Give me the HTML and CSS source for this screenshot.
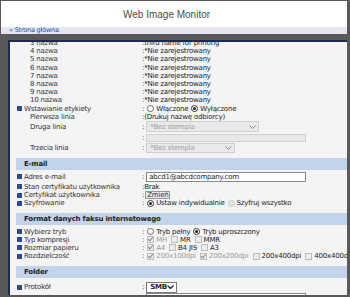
FILE: index.html
```html
<!DOCTYPE html>
<html lang="pl">
<head>
  <meta charset="UTF-8">
  <title>Web Image Monitor</title>
  <link rel="stylesheet" href="styles.css">
</head>
<body>
  <div class="top">
    <div class="brand">Web Image Monitor</div>
    <div class="crumb"><a href="#">&laquo; Strona główna</a></div>
  </div>

  <div class="frame">
    <div class="panel">
      <div class="list">
        <div class="row sub"><span class="key">3 nazwa</span><span class="val">:third name for printing</span></div>
        <div class="row sub"><span class="key">4 nazwa</span><span class="val">:*Nie zarejestrowany</span></div>
        <div class="row sub"><span class="key">5 nazwa</span><span class="val">:*Nie zarejestrowany</span></div>
        <div class="row sub"><span class="key">6 nazwa</span><span class="val">:*Nie zarejestrowany</span></div>
        <div class="row sub"><span class="key">7 nazwa</span><span class="val">:*Nie zarejestrowany</span></div>
        <div class="row sub"><span class="key">8 nazwa</span><span class="val">:*Nie zarejestrowany</span></div>
        <div class="row sub"><span class="key">9 nazwa</span><span class="val">:*Nie zarejestrowany</span></div>
        <div class="row sub"><span class="key">10 nazwa</span><span class="val">:*Nie zarejestrowany</span></div>
        <div class="row item"><span class="key">Wstawianie etykiety</span>
          <span class="val">:<span class="rb"></span>Włączone<span class="rb on"></span>Wyłączone</span></div>
        <div class="row sub"><span class="key">Pierwsza linia</span><span class="val">:(Drukuj nazwę odbiorcy)</span></div>
        <div class="row sub tall"><span class="key">Druga linia</span>
          <span class="val">:<span class="sel off w113">*Bez stempla<svg width="7" height="4" viewBox="0 0 7 4"><polyline points="0.5,0.5 3.5,3.5 6.5,0.5" fill="none" stroke="#8a8a8a"/></svg></span></span></div>
        <div class="row sub mid"><span class="key"></span><span class="val">:<span class="field off"></span></span></div>
        <div class="row sub tall2"><span class="key">Trzecia linia</span>
          <span class="val">:<span class="sel off w89">*Bez stempla<svg width="7" height="4" viewBox="0 0 7 4"><polyline points="0.5,0.5 3.5,3.5 6.5,0.5" fill="none" stroke="#8a8a8a"/></svg></span></span></div>

        <div class="section">E-mail</div>
        <div class="row item tall"><span class="key">Adres e-mail</span>
          <span class="val">:<span class="field">abcd1@abcdcompany.com</span></span></div>
        <div class="row item"><span class="key">Stan certyfikatu użytkownika</span><span class="val">:Brak</span></div>
        <div class="row item"><span class="key">Certyfikat użytkownika</span><span class="val">:<span class="btn">Zmień</span></span></div>
        <div class="row item"><span class="key">Szyfrowanie</span>
          <span class="val">:<span class="rb on"></span>Ustaw indywidualnie<span class="rb pale"></span>Szyfruj wszystko</span></div>

        <div class="section">Format danych faksu internetowego</div>
        <div class="row item"><span class="key">Wybierz tryb</span>
          <span class="val">:<span class="rb"></span>Tryb pełny<span class="rb on"></span>Tryb uproszczony</span></div>
        <div class="row item"><span class="key">Typ kompresji</span>
          <span class="val">:<span class="cb on"></span><span class="dim">MH</span><span class="cb"></span>MR<span class="cb"></span>MMR</span></div>
        <div class="row item"><span class="key">Rozmiar papieru</span>
          <span class="val">:<span class="cb on"></span><span class="dim">A4</span><span class="cb"></span>B4 JIS<span class="cb"></span>A3</span></div>
        <div class="row item"><span class="key">Rozdzielczość</span>
          <span class="val">:<span class="cb on"></span><span class="dim">200x100dpi</span><span class="cb on"></span><span class="dim">200x200dpi</span><span class="cb"></span>200x400dpi<span class="cb"></span>400x400dpi</span></div>

        <div class="section">Folder</div>
        <div class="row item tall3"><span class="key">Protokół</span>
          <span class="val">:<span class="sel w30">SMB<svg width="7" height="4" viewBox="0 0 7 4"><polyline points="0.5,0.5 3.5,3.5 6.5,0.5" fill="none" stroke="#222" stroke-width="1.3"/></svg></span></span></div>
        <div class="row item"><span class="key">Nazwa hosta</span><span class="val">:<span class="field"></span></span></div>
      </div>
    </div>
  </div>
</body>
</html>
```

FILE: styles.css
```css
html {
  background: #595959;
}

body {
  margin: 0;
  font-family: "DejaVu Sans", Verdana, sans-serif;
  font-size: 7px;
  letter-spacing: -0.2px;
  color: #333;
}

.top {
  margin: 1px 3px 0 1px;
  background: #fff;
}

.brand {
  height: 26px;
  line-height: 28px;
  padding-left: 122px;
  font-family: "Liberation Sans", Arial, sans-serif;
  font-size: 10px;
  letter-spacing: 0;
  color: #4a4a4a;
}

.crumb {
  height: 7px;
  line-height: 7px;
  padding-left: 8px;
  background: #e4e5ee;
}

.crumb a {
  color: #2a4ea6;
  font-size: 6.5px;
  text-decoration: none;
}

.frame {
  height: 263px;
  box-sizing: border-box;
  padding: 6px 3px 2px 8px;
}

.panel {
  height: 100%;
  box-sizing: border-box;
  border-top: 2px solid #1c2a58;
  border-left: 2px solid #1c2a58;
  background: #f4f4f4;
  overflow: hidden;
}

.list {
  margin-top: -3px;
}

.row {
  display: flex;
  align-items: center;
  height: 8.2px;
  white-space: nowrap;
}

.row.tall { height: 12px; }
.row.mid { height: 10px; }
.row.tall2 { height: 11px; }
.row.tall3 { height: 14px; }

.key {
  flex: 0 0 132px;
  box-sizing: border-box;
  display: flex;
  align-items: center;
}

.sub .key {
  padding-left: 20px;
}

.item .key {
  padding-left: 7px;
}

.item .key::before {
  content: "";
  width: 5px;
  height: 5px;
  margin-right: 2px;
  background: #2c4a8c;
}

.val {
  display: flex;
  align-items: center;
  color: #222;
}

.section {
  height: 12px;
  line-height: 12px;
  margin: 4px 0 1px 6px;
  padding-left: 8px;
  background: #c2d3ea;
  font-weight: bold;
  color: #1e1e1e;
}

.row.item + .section {
  margin-top: 6px;
}

.section + .row.item:not(.tall) {
  margin-top: 2px;
}

.rb {
  width: 5px;
  height: 5px;
  margin: 0 2px 0 3px;
  border: 1px solid #6a6a6a;
  border-radius: 50%;
  background: #fff;
  position: relative;
}

.rb.on {
  border-color: #333;
}

.rb.on::after {
  content: "";
  position: absolute;
  left: 1px;
  top: 1px;
  width: 3px;
  height: 3px;
  border-radius: 50%;
  background: #222;
}

.rb.pale {
  border-color: #c8c8c8;
  background: #e6e6e6;
}

.cb {
  width: 5px;
  height: 5px;
  margin: 0 2px 0 4px;
  border: 1px solid #bdbdbd;
  background: #ececec;
  position: relative;
}

.val > .cb:first-child,
.val > .rb:first-child {
  margin-left: 3px;
}

.cb.on::after {
  content: "";
  position: absolute;
  left: 1px;
  top: -1px;
  width: 2px;
  height: 4px;
  border-right: 1px solid #8c8c8c;
  border-bottom: 1px solid #8c8c8c;
  transform: rotate(40deg);
}

.dim {
  color: #9a9a9a;
}

.sel {
  display: flex;
  align-items: center;
  justify-content: space-between;
  box-sizing: border-box;
  height: 11px;
  margin-left: 2px;
  padding: 0 2px 0 3px;
  border: 1px solid #7a7a7a;
  background: #fff;
  color: #222;
}

.sel.off {
  border-color: #cfcfcf;
  background: #e9e9e9;
  color: #a0a0a0;
}

.row.tall2 .sel { height: 10px; }

.w113 { width: 113px; }
.w89 { width: 89px; }
.w30 { width: 31px; font-weight: bold; }

.field {
  box-sizing: border-box;
  width: 160px;
  height: 10px;
  line-height: 8px;
  margin-left: 2px;
  padding-left: 2px;
  border: 1px solid #8a8a8a;
  background: #fff;
  color: #222;
}

.field.off {
  height: 8px;
  border-color: #d0d0d0;
  background: #e8e8e8;
}

.btn {
  box-sizing: border-box;
  height: 8px;
  line-height: 6px;
  margin-left: 1px;
  padding: 0 1px;
  border: 1px solid #9a9a9a;
  background: #e9e9e9;
  color: #333;
}
```
